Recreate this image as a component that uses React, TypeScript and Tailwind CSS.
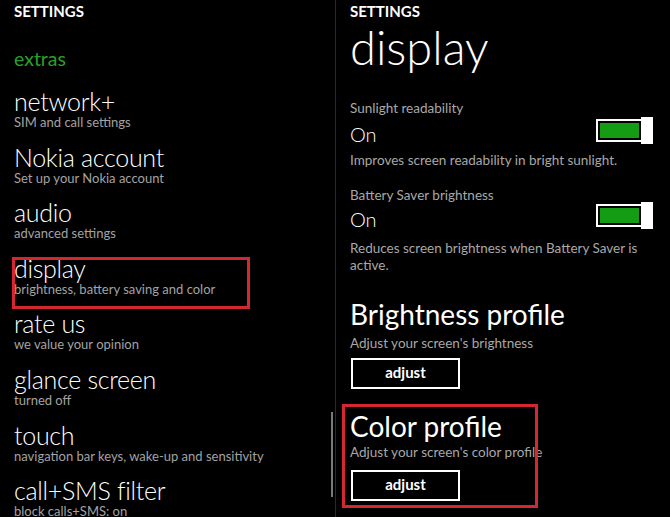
import React from "react";

const items: [string, string][] = [
  ["network+", "SIM and call settings"],
  ["Nokia account", "Set up your Nokia account"],
  ["audio", "advanced settings"],
  ["display", "brightness, battery saving and color"],
  ["rate us", "we value your opinion"],
  ["glance screen", "turned off"],
  ["touch", "navigation bar keys, wake-up and sensitivity"],
  ["call+SMS filter", "block calls+SMS: on"],
];

function Toggle() {
  return (
    <div className="flex items-center mt-[-5px]">
      <div className="w-[45px] h-[23px] border-2 border-r-0 border-white p-[2px]">
        <div className="w-[39px] h-full bg-[#149c14]" />
      </div>
      <div className="w-[12px] h-[27px] bg-white" />
    </div>
  );
}

function Button() {
  return (
    <div className="w-[109px] h-[31px] border-2 border-white flex items-center justify-center text-[15px] font-bold leading-none pb-[2px]">
      adjust
    </div>
  );
}

export default function App() {
  return (
    <div className="w-[670px] h-[517px] bg-black text-white flex overflow-hidden font-['Lato',sans-serif]">
      {/* Left panel */}
      <div className="w-[336px] h-full border-r border-[#2a2a2a] relative pl-[14px] flex flex-col overflow-hidden">
        <div className="mt-[1px] text-[15px] leading-[20px] font-bold">SETTINGS</div>
        <div className="mt-[26px] text-[19.5px] leading-[24px] text-[#2aa02a]">extras</div>
        <div className="mt-[16px] flex flex-col">
          {items.map(([t, s]) => (
            <div key={t} className="h-[55.6px] shrink-0 flex flex-col relative">
              <div className="text-[25px] leading-[28px] font-light tracking-[-0.3px] whitespace-nowrap">{t}</div>
              <div className="text-[13px] leading-[14px] text-[#a3a3a3] whitespace-nowrap">{s}</div>
              {t === "display" && (
                <div className="absolute left-[-2px] top-[3px] w-[238px] h-[52px] border-[3px] border-[#d4272f]" />
              )}
            </div>
          ))}
        </div>
        <div className="absolute left-[331px] top-[412px] w-[2px] h-[85px] bg-[#7a7a7a]" />
      </div>

      {/* Right panel */}
      <div className="flex-1 h-full pl-[14px] pr-[17px] flex flex-col">
        <div className="mt-[1px] text-[15px] leading-[20px] font-bold">SETTINGS</div>
        <div className="mt-[2px] text-[47px] leading-[48px] font-light">display</div>

        <div className="mt-[29px] text-[13.5px] leading-[16px] text-[#a8a8a8]">Sunlight readability</div>
        <div className="mt-[6px] flex justify-between items-start">
          <div className="text-[20px] leading-[24px] font-light">On</div>
          <Toggle />
        </div>
        <div className="mt-[6px] text-[13.5px] leading-[16px] text-[#a8a8a8]">
          Improves screen readability in bright sunlight.
        </div>

        <div className="mt-[19px] text-[13.5px] leading-[16px] text-[#a8a8a8]">Battery Saver brightness</div>
        <div className="mt-[4px] flex justify-between items-start">
          <div className="text-[20px] leading-[24px] font-light">On</div>
          <Toggle />
        </div>
        <div className="mt-[8.5px] text-[13.5px] leading-[17px] text-[#a8a8a8] w-[300px]">
          Reduces screen brightness when Battery Saver is active.
        </div>

        <div className="mt-[24.5px] text-[28px] leading-[32px]">Brightness profile</div>
        <div className="mt-[5px] text-[13.5px] leading-[16px] text-[#a8a8a8]">Adjust your screen's brightness</div>
        <div className="mt-[7px] ml-[1px]">
          <Button />
        </div>

        <div className="relative mt-[21px]">
          <div className="text-[28px] leading-[32px] whitespace-nowrap">Color profile</div>
          <div className="mt-[2px] text-[13.5px] leading-[16px] text-[#a8a8a8] whitespace-nowrap">
            Adjust your screen's color profile
          </div>
          <div className="mt-[10px] ml-[1px]">
            <Button />
          </div>
          <div className="absolute left-[-8px] top-[-6px] w-[196px] h-[104px] border-[3px] border-[#d4272f]" />
        </div>
      </div>
    </div>
  );
}
